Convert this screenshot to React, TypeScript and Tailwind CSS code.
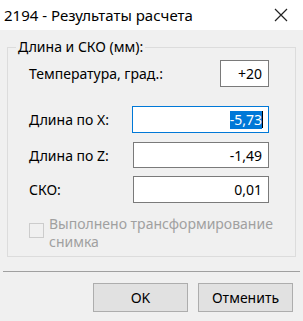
import React from 'react';

export default function App() {
  const font = { fontFamily: '"Noto Sans", "Segoe UI", sans-serif' };
  return (
    <div
      className="w-[303px] h-[321px] bg-[#f0f0f0] flex flex-col text-[14px] text-black overflow-hidden"
      style={font}
    >
      {/* Title bar */}
      <div className="h-[30px] bg-white flex items-center justify-between pl-[4px] pr-[15px]">
        <span className="text-[15px]">2194 - Результаты расчета</span>
        <svg width="14" height="14" viewBox="0 0 14 14">
          <path d="M1 1 L13 13 M13 1 L1 13" stroke="#222" strokeWidth="1.2" />
        </svg>
      </div>

      {/* Group box */}
      <fieldset className="mx-[7px] mt-[8px] h-[219px] border border-[#dcdcdc] px-[21px] pb-[10px]">
        <legend className="ml-[-13px] px-[2px] leading-[18px]">Длина и СКО (мм):</legend>

        <div className="flex items-center justify-between mt-[4px] pr-[5px]">
          <span>Температура, град.:</span>
          <div className="w-[49px] h-[27px] border border-[#7a7a7a] bg-white flex items-center justify-end pr-[6px]">
            +20
          </div>
        </div>

        <div className="flex items-center justify-between mt-[19px] pr-[5px]">
          <span>Длина по X:</span>
          <div className="w-[137px] h-[27px] border border-[#0078d7] bg-white flex items-center justify-end pr-[5px]">
            <span className="bg-[#0078d7] text-white leading-[18px]">-5,73</span>
            <span className="w-px h-[17px] bg-black" />
          </div>
        </div>

        <div className="flex items-center justify-between mt-[9px] pr-[5px]">
          <span>Длина по Z:</span>
          <div className="w-[136px] h-[26px] border border-[#7a7a7a] bg-white flex items-center justify-end pr-[6px]">
            -1,49
          </div>
        </div>

        <div className="flex items-center justify-between mt-[8px] pr-[5px]">
          <span>СКО:</span>
          <div className="w-[136px] h-[27px] border border-[#7a7a7a] bg-white flex items-center justify-end pr-[6px]">
            0,01
          </div>
        </div>

        <div className="flex items-start gap-[5px] mt-[12px] text-[#a0a0a0]">
          <div className="w-[15px] h-[15px] mt-[8px] border border-[#cccccc] bg-[#f0f0f0] shrink-0" />
          <span className="leading-[18px]">
            Выполнено трансформирование
            <br />
            снимка
          </span>
        </div>
      </fieldset>

      {/* Separator */}
      <div className="mx-[3px] mt-[14px] h-px bg-[#a0a0a0]" />

      {/* Buttons */}
      <div className="flex justify-end gap-[10px] mt-[11px] pr-[10px]">
        <button className="w-[95px] h-[29px] bg-[#e1e1e1] border border-[#adadad]">OK</button>
        <button className="w-[95px] h-[29px] bg-[#e1e1e1] border border-[#adadad]">Отменить</button>
      </div>
    </div>
  );
}
